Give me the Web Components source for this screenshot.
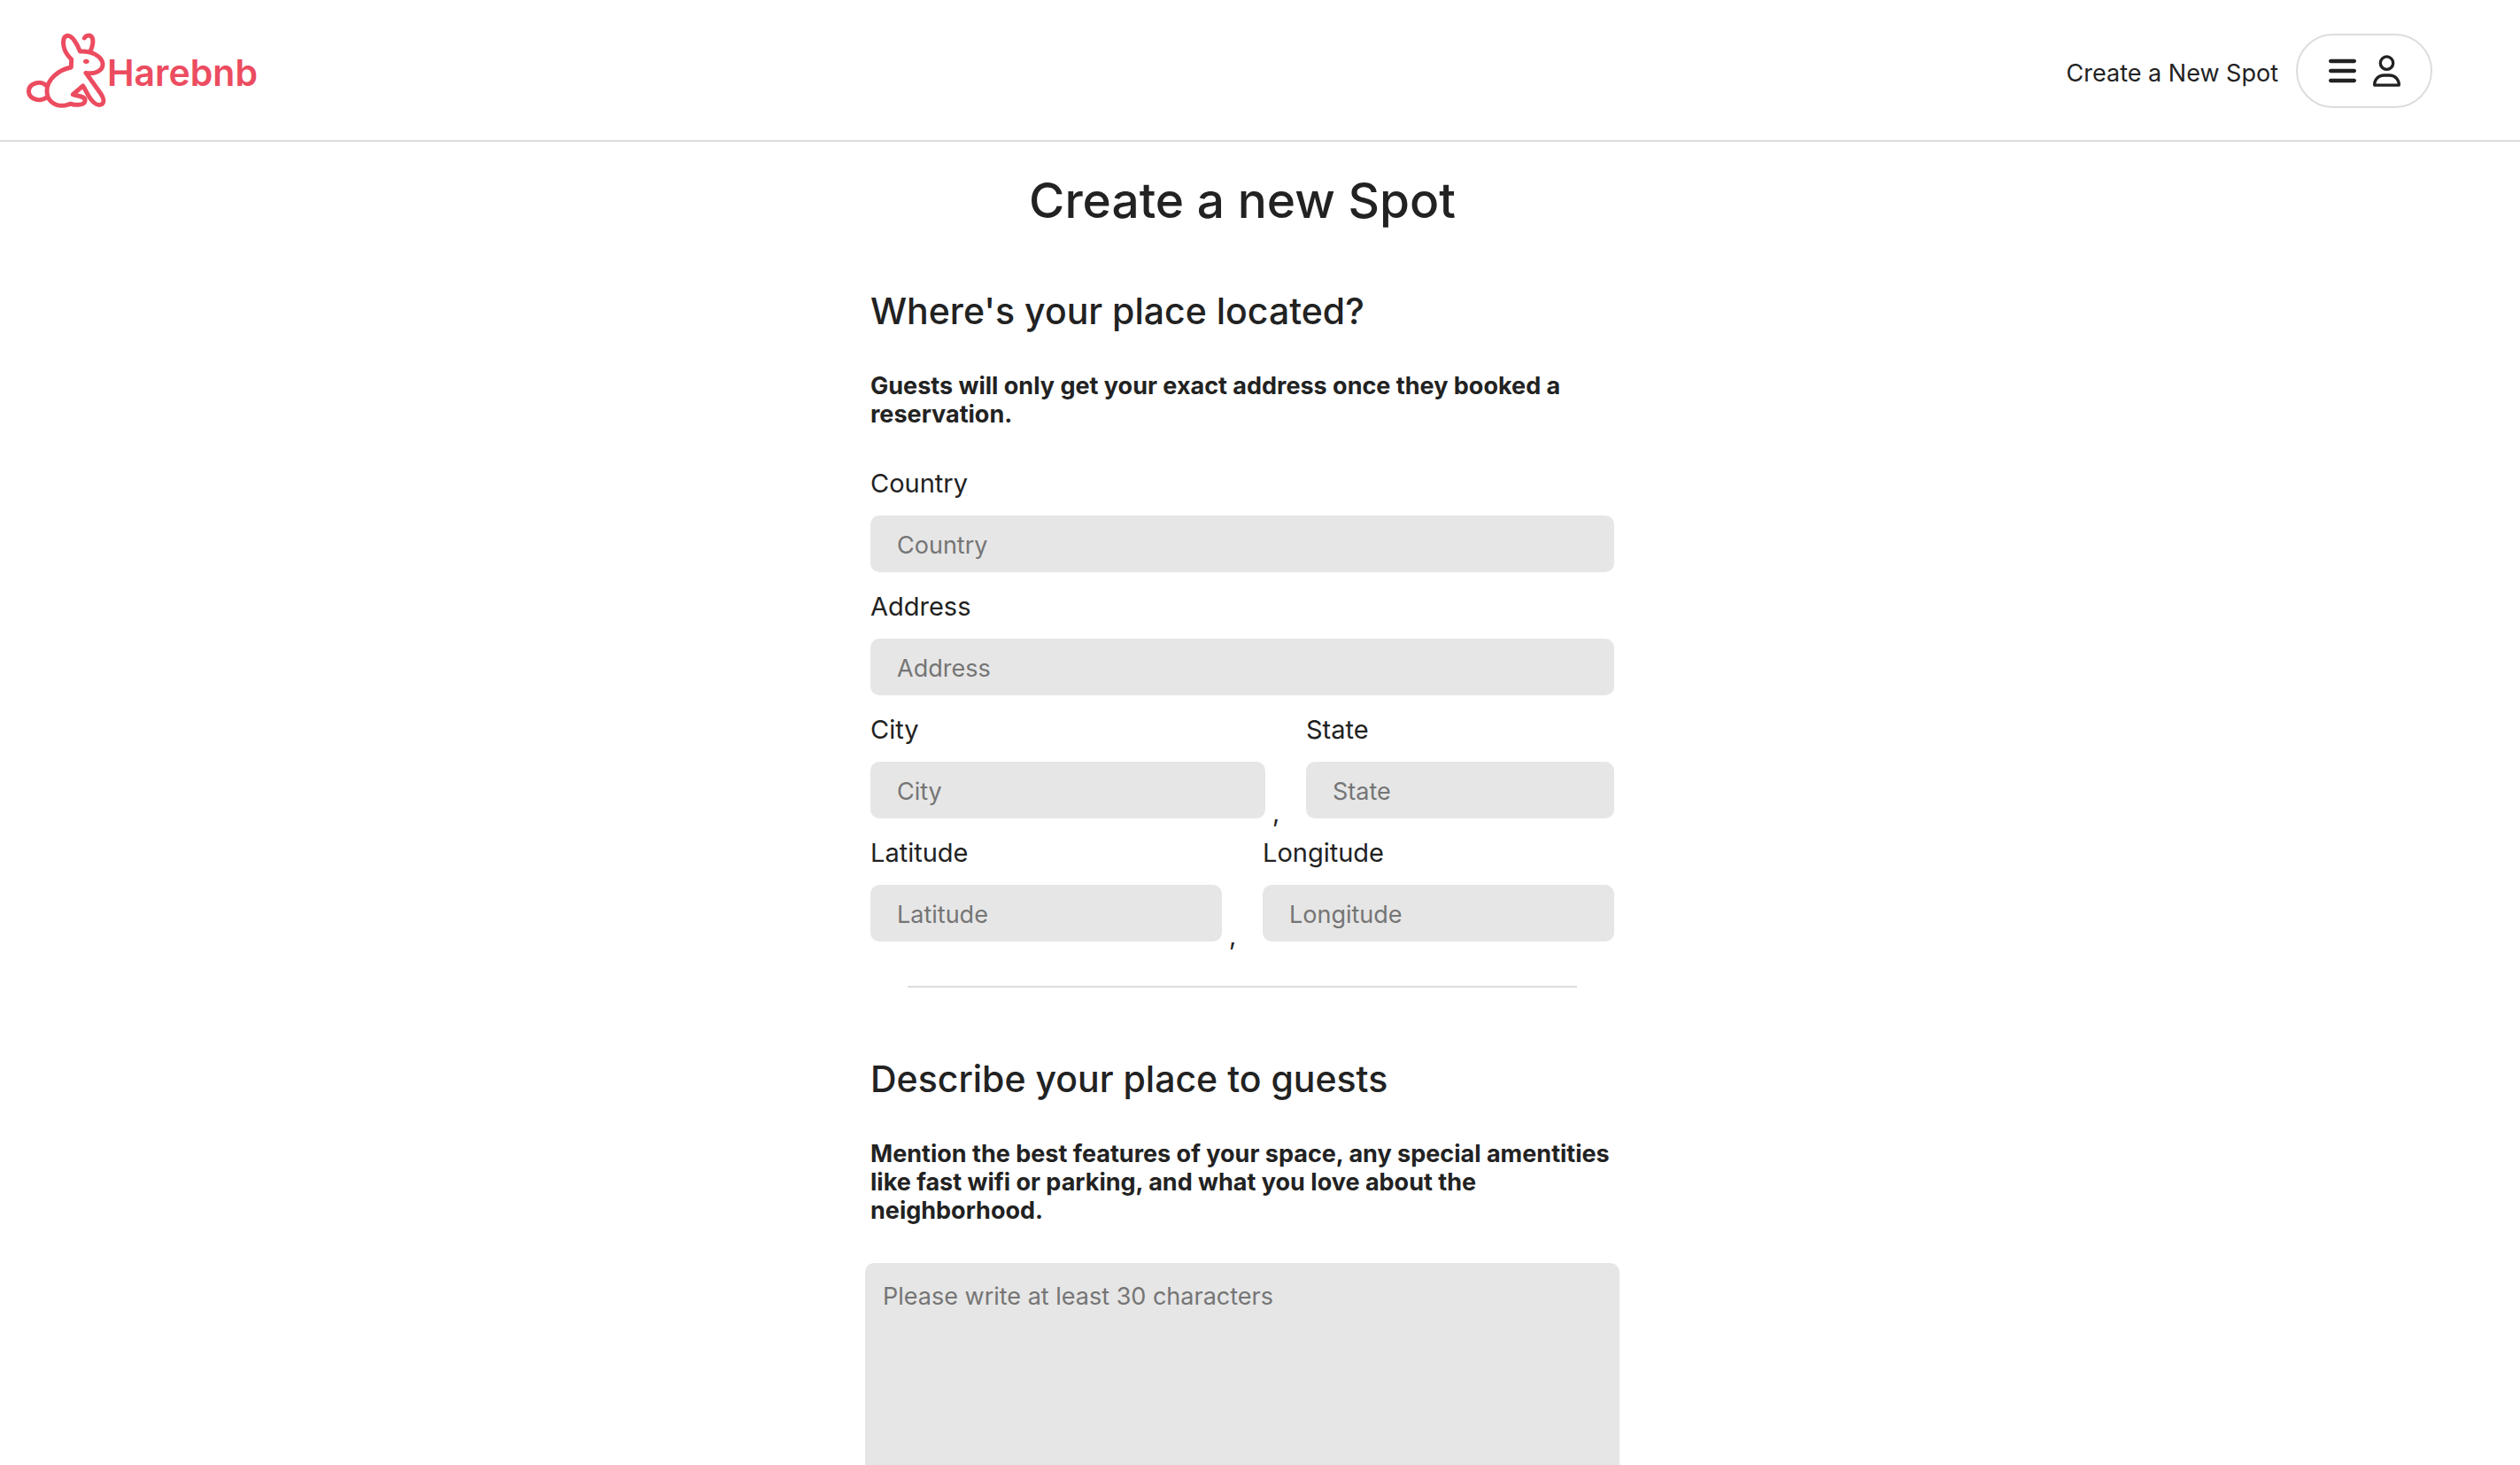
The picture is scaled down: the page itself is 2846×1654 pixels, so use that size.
<!DOCTYPE html>
<html lang="en">
<head>
<meta charset="utf-8">
<title>Harebnb</title>
<style>
  body { margin: 0; background: #fff; color: #222; font-family: Inter, "Liberation Sans", sans-serif; font-size: 27px; }
</style>
</head>
<body>
<hare-app></hare-app>

<template id="hare-app">
  <style>:host { display: block; }</style>
  <hare-header></hare-header>
  <spot-form></spot-form>
</template>

<template id="hare-header">
  <style>
    :host { display: block; border-bottom: 2px solid #ddd; }
    header { display: flex; justify-content: space-between; align-items: center; height: 158px; padding: 0 99px 0 30px; box-sizing: border-box; }
    nav { display: flex; align-items: center; gap: 20px; padding-top: 2px; }
    .create { color: inherit; text-decoration: none; line-height: 34px; padding-top: 6px; font-size: 27px; }
    button { display: flex; align-items: center; justify-content: center; gap: 19px; width: 154px; height: 84px; border: 2px solid #ddd; border-radius: 42px; background: #fff; color: inherit; padding: 0; }
    button svg { display: block; height: 36px; width: 31px; fill: currentColor; }
  </style>
  <header>
    <hare-logo></hare-logo>
    <nav>
      <a class="create" href="#new">Create a New Spot</a>
      <button type="button" aria-label="Account menu">
        <svg viewBox="0 0 448 512" aria-hidden="true"><path d="M0 96C0 78.3 14.3 64 32 64H416c17.7 0 32 14.3 32 32s-14.3 32-32 32H32C14.3 128 0 113.7 0 96zM0 256c0-17.7 14.3-32 32-32H416c17.7 0 32 14.3 32 32s-14.3 32-32 32H32c-17.7 0-32-14.3-32-32zM448 416c0 17.7-14.3 32-32 32H32c-17.7 0-32-14.3-32-32s14.3-32 32-32H416c17.7 0 32 14.3 32 32z"/></svg>
        <svg viewBox="0 0 448 512" aria-hidden="true"><path d="M304 128a80 80 0 1 0 -160 0 80 80 0 1 0 160 0zM96 128a128 128 0 1 1 256 0A128 128 0 1 1 96 128zM49.3 464H398.7c-8.9-63.3-63.3-112-129-112H178.3c-65.7 0-120.1 48.7-129 112zM0 482.3C0 383.8 79.8 304 178.3 304h91.4C368.2 304 448 383.8 448 482.3c0 16.4-13.3 29.7-29.7 29.7H29.7C13.3 512 0 498.7 0 482.3z"/></svg>
      </button>
    </nav>
  </header>
</template>

<template id="hare-logo">
  <style>
    :host { display: block; }
    a { display: flex; align-items: center; gap: 1px; color: #ec4c60; text-decoration: none; font-size: 41px; font-weight: 600; line-height: 50px; padding-top: 2px; }
    span { padding-top: 3px; }
    svg { display: block; width: 90px; height: 86px; }
  </style>
  <a href="#home">
    <svg viewBox="90 111 270 258" fill="none" stroke="#ec4c60" stroke-width="15" stroke-linejoin="round" stroke-linecap="round" aria-hidden="true">
      <path d="M156 289C146 280 130 278 117 283C92 292 91 322 114 334C128 341 146 339 158 330"/>
      <path d="M241 228C196 237 159 270 159 308C159 340 183 358 210 358C224 358 230 353 242 352C256 357 288 357 288 341C290 325 262 326 247 320L281 291C290 303 295 319 307 335C319 352 334 359 345 353C355 346 350 330 342 318L291 247C318 252 350 242 348 215C344 190 309 171 271 174C262 149 245 120 228 121C211 124 213 151 219 168C224 182 233 192 242 201Z"/>
      <path d="M286 129C291 119 309 115 314 132C317 148 312 160 307 172"/>
      <ellipse cx="292" cy="208" rx="10" ry="8" fill="#ec4c60" stroke="none"/>
    </svg>
    <span>Harebnb</span>
  </a>
</template>

<template id="spot-form">
  <style>
    :host { display: block; padding: 28px 40px 0 0; }
    form { width: 840px; margin: 0 auto; }
    h1 { margin: 0 0 59px; font-size: 55px; line-height: 76px; font-weight: 500; text-align: center; }
    .fields { display: flex; flex-direction: column; gap: 20px; }
    .row { display: flex; align-items: flex-end; }
    .row spot-field { flex: 1; min-width: 0; }
    .row .city { flex: 446; }
    .row .state { flex: 348; }
    .sep { width: 38px; height: 25px; padding-left: 8px; font-size: 29px; line-height: 38px; }
    hr { width: 90%; margin: 50px auto 75px; border: 0; border-top: 2px solid #ddd; }
  </style>
  <form>
    <h1>Create a new Spot</h1>
    <form-section>
      <span slot="title">Where's your place located?</span>
      <span slot="note">Guests will only get your exact address once they booked a reservation.</span>
      <div class="fields">
        <spot-field label="Country"></spot-field>
        <spot-field label="Address"></spot-field>
        <div class="row"><spot-field class="city" label="City"></spot-field><span class="sep">,</span><spot-field class="state" label="State"></spot-field></div>
        <div class="row"><spot-field label="Latitude"></spot-field><span class="sep">,</span><spot-field label="Longitude"></spot-field></div>
      </div>
    </form-section>
    <hr>
    <form-section>
      <span slot="title">Describe your place to guests</span>
      <span slot="note">Mention the best features of your space, any special amentities like fast wifi or parking, and what you love about the neighborhood.</span>
      <spot-description></spot-description>
    </form-section>
  </form>
</template>

<template id="form-section">
  <style>
    :host { display: block; }
    h2 { margin: 0 0 41px; font-size: 41px; line-height: 56px; font-weight: 500; }
    p { margin: 0 0 43px; font-size: 27px; line-height: 32px; font-weight: 700; }
  </style>
  <h2><slot name="title"></slot></h2>
  <p><slot name="note"></slot></p>
  <slot></slot>
</template>

<template id="spot-field">
  <style>
    :host { display: block; }
    label { display: block; margin-bottom: 17px; font-size: 29px; line-height: 38px; }
    input { display: block; width: 100%; height: 64px; box-sizing: border-box; border: 0; border-radius: 10px; padding: 2px 30px 0; background: #e6e6e6; color: inherit; font: inherit; font-size: 27px; outline: 0; }
    input::placeholder { color: #757575; opacity: 1; }
  </style>
  <label for="control"></label>
  <input id="control" type="text">
</template>

<template id="spot-description">
  <style>
    :host { display: block; margin: 0 -6px; }
    textarea { display: block; width: 100%; height: 300px; box-sizing: border-box; border: 0; border-radius: 10px; padding: 20px; background: #e6e6e6; color: inherit; font: inherit; font-size: 27px; line-height: 36px; resize: none; outline: 0; }
    textarea::placeholder { color: #757575; opacity: 1; }
  </style>
  <textarea aria-label="Description" placeholder="Please write at least 30 characters"></textarea>
</template>

<script>
  class TemplateElement extends HTMLElement {
    constructor() {
      super();
      const template = document.getElementById(this.localName);
      this.attachShadow({ mode: "open" }).append(template.content.cloneNode(true));
    }
  }
  class HareApp extends TemplateElement {}
  class HareHeader extends TemplateElement {}
  class HareLogo extends TemplateElement {}
  class SpotForm extends TemplateElement {}
  class FormSection extends TemplateElement {}
  class SpotDescription extends TemplateElement {}
  class SpotField extends TemplateElement {
    connectedCallback() {
      const text = this.getAttribute("label");
      this.shadowRoot.querySelector("label").textContent = text;
      this.shadowRoot.querySelector("input").placeholder = text;
    }
  }
  customElements.define("spot-field", SpotField);
  customElements.define("spot-description", SpotDescription);
  customElements.define("form-section", FormSection);
  customElements.define("spot-form", SpotForm);
  customElements.define("hare-logo", HareLogo);
  customElements.define("hare-header", HareHeader);
  customElements.define("hare-app", HareApp);
</script>
</body>
</html>
